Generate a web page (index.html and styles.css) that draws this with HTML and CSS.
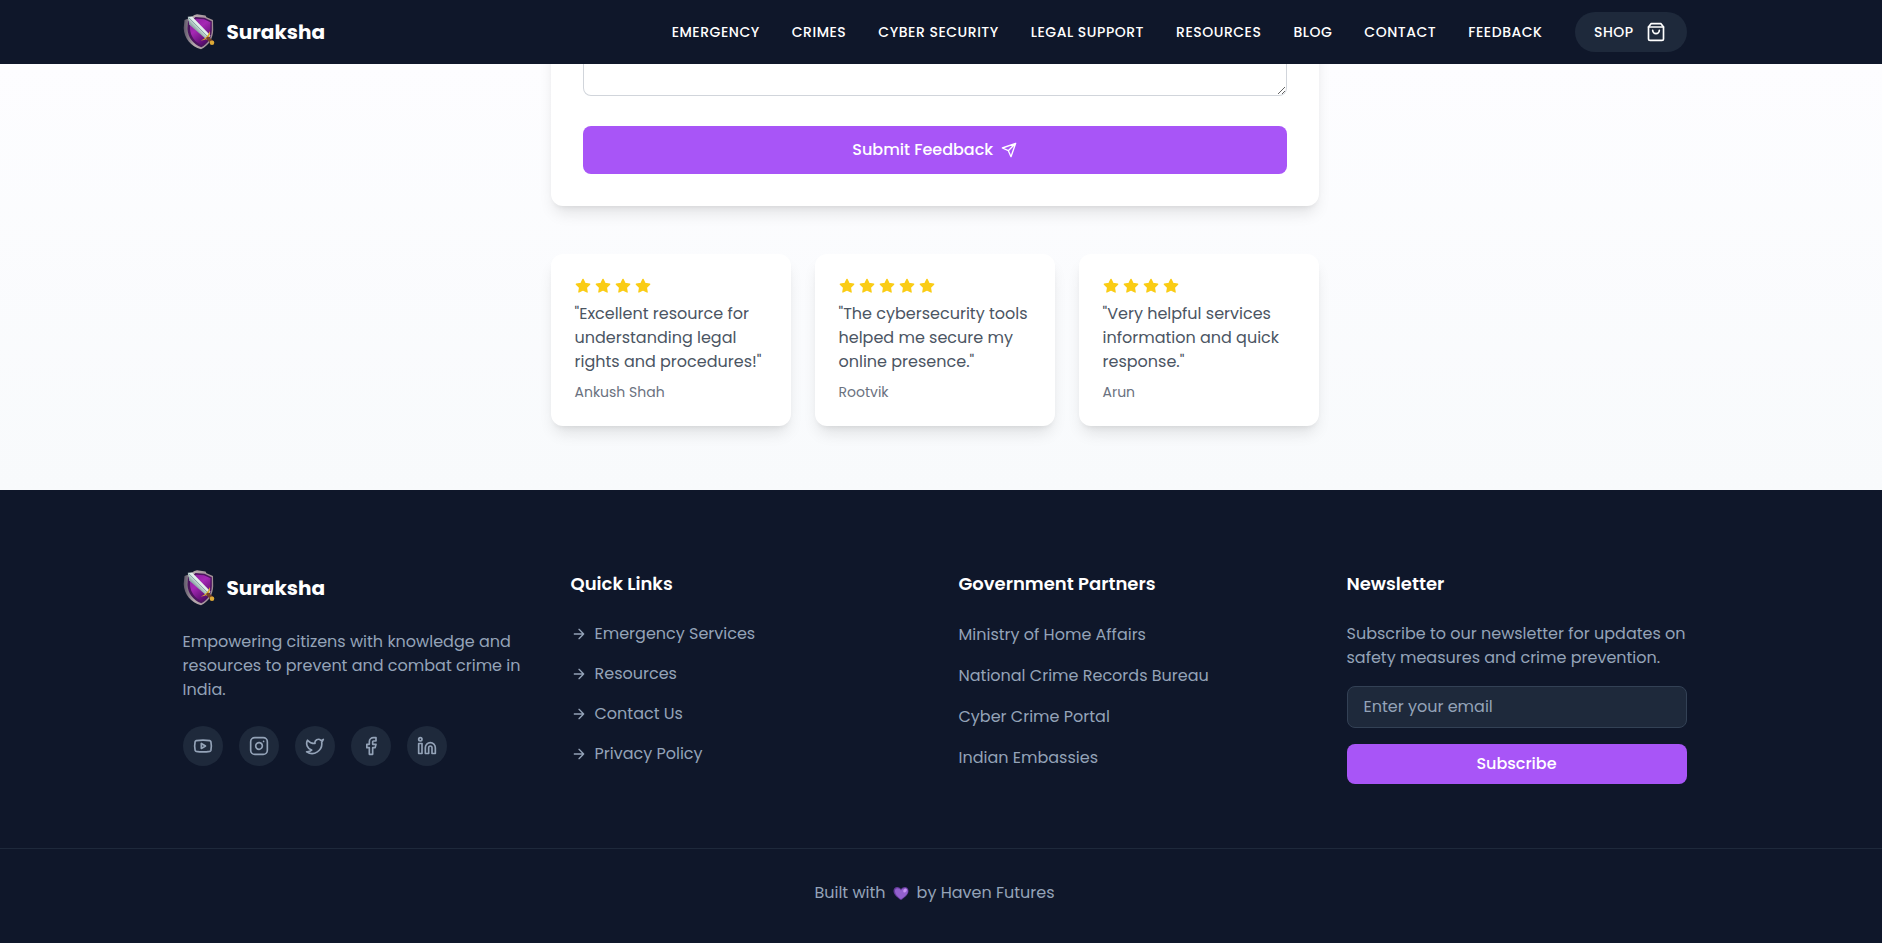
FILE: index.html
```
<!DOCTYPE html>
<html lang="en">
<head>
<meta charset="utf-8">
<title>Suraksha</title>
<link rel="stylesheet" href="styles.css">
</head>
<body>
<svg width="0" height="0" class="defs" aria-hidden="true">
  <defs>
    <linearGradient id="purple" x1="0" y1="0" x2="0.6" y2="1"><stop offset="0" stop-color="#8a1c9c"/><stop offset="0.45" stop-color="#a528b4"/><stop offset="1" stop-color="#560a6b"/></linearGradient>
    <linearGradient id="rim" x1="0" y1="0" x2="1" y2="0"><stop offset="0" stop-color="#5d5668"/><stop offset="0.35" stop-color="#b5a9ad"/><stop offset="1" stop-color="#9c8b91"/></linearGradient>
    <linearGradient id="blade" x1="0" y1="1" x2="1" y2="0"><stop offset="0.4" stop-color="#8fa9a8"/><stop offset="0.55" stop-color="#e3f0ec"/></linearGradient>
    <symbol id="shield" viewBox="0 0 36 36">
      <path d="M1.500 6 6 4.300 11.500 1 14 .200 22.500 1.500 23.500 3.200 30 6 30.200 16C30 24.500 26 31.500 18 35.200 8 32.500 1 24.500.700 14z" fill="url(#rim)"/>
      <path d="M5 7 9 6 12.500 3 21.500 3.700 28.800 7.300 28.800 16C28.500 24 25 30 18.300 33.300 10 30 5 23.500 4.500 15z" fill="#4d155f"/>
      <path d="M7 7.500 13.500 4.800 21 5.300 27.500 8.200 27.300 16C27 23 24 28 18.500 31.200 11.500 28 7.500 22 7 15z" fill="url(#purple)"/>
      <path d="M4.800 2.800 9 2.600 27.500 21.500 24 26 6.200 10.500z" fill="url(#blade)"/>
      <path d="M6 4 25.500 23.500" stroke="#78999a" stroke-width=".8"/>
      <path d="M26.800 17c1.800 5-3.500 9.500-9 9.500 4.500-1.600 7.500-5 9-9.500z" fill="#d9a72e"/>
      <path d="m25 24.500 4 3.500" stroke="#76432a" stroke-width="3.500"/>
      <circle cx="29" cy="28.700" r="2.300" fill="#dda936"/>
    </symbol>
    <symbol id="star" viewBox="0 0 24 24"><path d="M12 2l3.090 6.260L22 9.270l-5 4.870 1.180 6.880L12 17.770l-6.180 3.250L7 14.140 2 9.270l6.910-1.010L12 2z" fill="#facc15" stroke="#facc15" stroke-width="2" stroke-linejoin="round"/></symbol>
    <symbol id="arrow" viewBox="0 0 24 24"><path d="M5 12h14M12 5l7 7-7 7"/></symbol>
  </defs>
</svg>

<header class="header">
  <div class="container header-row">
    <a class="brand"><svg class="logo"><use href="#shield"/></svg><span>Suraksha</span></a>
    <nav class="nav">
      <a>EMERGENCY</a><a>CRIMES</a><a>CYBER SECURITY</a><a>LEGAL SUPPORT</a><a>RESOURCES</a><a>BLOG</a><a>CONTACT</a><a>FEEDBACK</a>
      <a class="shop">SHOP<svg class="i20" viewBox="0 0 24 24"><path d="M6 2 3 6v14a2 2 0 0 0 2 2h14a2 2 0 0 0 2-2V6l-3-4z"/><path d="M3 6h18M16 10a4 4 0 0 1-8 0"/></svg></a>
    </nav>
  </div>
</header>

<main class="main">
  <section class="form-card">
    <textarea class="message" aria-label="Message"></textarea>
    <button class="btn submit">Submit Feedback<svg class="i16" viewBox="0 0 24 24"><path d="M22 2 11 13M22 2l-7 20-4-9-9-4z"/></svg></button>
  </section>
  <section class="reviews">
    <article class="review">
      <div class="stars"><svg><use href="#star"/></svg><svg><use href="#star"/></svg><svg><use href="#star"/></svg><svg><use href="#star"/></svg></div>
      <p class="quote">"Excellent resource for understanding legal rights and procedures!"</p>
      <p class="name">Ankush Shah</p>
    </article>
    <article class="review">
      <div class="stars"><svg><use href="#star"/></svg><svg><use href="#star"/></svg><svg><use href="#star"/></svg><svg><use href="#star"/></svg><svg><use href="#star"/></svg></div>
      <p class="quote">"The cybersecurity tools helped me secure my online presence."</p>
      <p class="name">Rootvik</p>
    </article>
    <article class="review">
      <div class="stars"><svg><use href="#star"/></svg><svg><use href="#star"/></svg><svg><use href="#star"/></svg><svg><use href="#star"/></svg></div>
      <p class="quote">"Very helpful services information and quick response."</p>
      <p class="name">Arun</p>
    </article>
  </section>
</main>

<footer class="footer">
  <div class="container columns">
    <div>
      <a class="brand"><svg class="logo"><use href="#shield"/></svg><span>Suraksha</span></a>
      <p class="about">Empowering citizens with knowledge and resources to prevent and combat crime in India.</p>
      <div class="socials">
        <a><svg class="i20" viewBox="0 0 24 24"><path d="M2.500 17a24.120 24.120 0 0 1 0-10 2 2 0 0 1 1.400-1.400 49.560 49.560 0 0 1 16.200 0A2 2 0 0 1 21.500 7a24.120 24.120 0 0 1 0 10 2 2 0 0 1-1.400 1.400 49.550 49.550 0 0 1-16.200 0A2 2 0 0 1 2.500 17"/><path d="m10 15 5-3-5-3z"/></svg></a>
        <a><svg class="i20" viewBox="0 0 24 24"><rect x="2" y="2" width="20" height="20" rx="5"/><path d="M16 11.370A4 4 0 1 1 12.630 8 4 4 0 0 1 16 11.370zM17.500 6.500h.01"/></svg></a>
        <a><svg class="i20" viewBox="0 0 24 24"><path d="M22 4s-.7 2.100-2 3.400c1.600 10-9.400 17.300-18 11.600 2.200.1 4.400-.6 6-2C3 15.500.500 9.600 3 5c2.200 2.600 5.600 4.100 9 4-.9-4.200 4-6.600 7-3.800 1.100 0 3-1.200 3-1.200z"/></svg></a>
        <a><svg class="i20" viewBox="0 0 24 24"><path d="M18 2h-3a5 5 0 0 0-5 5v3H7v4h3v8h4v-8h3l1-4h-4V7a1 1 0 0 1 1-1h3z"/></svg></a>
        <a><svg class="i20" viewBox="0 0 24 24"><path d="M16 8a6 6 0 0 1 6 6v7h-4v-7a2 2 0 0 0-4 0v7h-4v-7a6 6 0 0 1 6-6z"/><rect x="2" y="9" width="4" height="12"/><circle cx="4" cy="4" r="2"/></svg></a>
      </div>
    </div>
    <div>
      <h3>Quick Links</h3>
      <ul class="links">
        <li><svg class="i16"><use href="#arrow"/></svg><span>Emergency Services</span></li>
        <li><svg class="i16"><use href="#arrow"/></svg><span>Resources</span></li>
        <li><svg class="i16"><use href="#arrow"/></svg><span>Contact Us</span></li>
        <li><svg class="i16"><use href="#arrow"/></svg><span>Privacy Policy</span></li>
      </ul>
    </div>
    <div>
      <h3>Government Partners</h3>
      <ul class="partners">
        <li>Ministry of Home Affairs</li><li>National Crime Records Bureau</li><li>Cyber Crime Portal</li><li>Indian Embassies</li>
      </ul>
    </div>
    <div>
      <h3>Newsletter</h3>
      <p>Subscribe to our newsletter for updates on safety measures and crime prevention.</p>
      <input class="email" type="email" placeholder="Enter your email">
      <button class="btn subscribe">Subscribe</button>
    </div>
  </div>
  <div class="credit">
    <span>Built with</span>
    <svg class="heart" viewBox="0 0 16 16"><path d="M8 15C4 12 0 9 0 5.200 0 .6 5.500-.2 8 3.300 10.500-.2 16 .6 16 5.200 16 9 12 12 8 15z" fill="#653b9b"/><path d="M8 14C4.500 11.500 1.500 8.500 1.500 5.200 1.500 1.800 6 1.500 8 4.800c2-3.500 7.300-2.800 7.300.6C15.300 9 11.500 11.800 8 14z" fill="#9260cd"/><ellipse cx="12.300" cy="4.800" rx="2.300" ry="1.600" transform="rotate(-50 12.300 4.800)" fill="#c794f5"/></svg>
    <span>by Haven Futures</span>
  </div>
</footer>
</body>
</html>
```
FILE: styles.css
```
* { box-sizing: border-box; margin: 0; padding: 0; }

body {
  height: 943px;
  overflow: hidden;
  background: #0f172a;
  font-family: Poppins, Inter, sans-serif;
  font-size: 16px;
  line-height: 24px;
  display: flex;
  flex-direction: column;
}

.defs { position: absolute; }
svg { display: block; flex: none; fill: none; stroke: currentColor; stroke-width: 2; stroke-linecap: round; stroke-linejoin: round; }
.logo { width: 36px; height: 36px; stroke: none; }
.i16 { width: 16px; height: 16px; }
.i20 { width: 20px; height: 20px; }
ul { list-style: none; }
input, button, textarea { font: inherit; }

.container { width: 1504px; margin-left: 182.5px; }

/* Header */
.header { height: 64px; flex: none; background: #0f172a; color: #fff; position: relative; z-index: 1; }
.header-row { height: 64px; display: flex; align-items: center; justify-content: space-between; }
.brand { display: flex; align-items: center; gap: 8px; color: #fff; font-size: 20px; font-weight: 700; line-height: 36px; }
.nav { display: flex; align-items: center; gap: 32px; font-size: 14px; font-weight: 500; letter-spacing: .52px; }
.shop { width: 112px; height: 40px; padding: 0 21px 0 19.5px; border-radius: 20px; background: #1e293b; display: flex; align-items: center; justify-content: space-between; }

/* Feedback form and testimonials */
.main { height: 426px; flex: none; display: flow-root; padding-left: 550.5px; background: linear-gradient(#fdfdff, #f8fafc); }
.form-card { width: 768px; height: 242px; margin-top: -100px; padding: 100px 32px 0; background: #fff; border-radius: 12px; box-shadow: 0 10px 15px -3px rgba(0,0,0,.1), 0 4px 6px -4px rgba(0,0,0,.1); }
.message { display: block; width: 704px; height: 32px; border: 1px solid #d1d5db; border-top: 0; border-radius: 0 0 8px 8px; background: #fff; resize: vertical; }
.btn { display: flex; align-items: center; justify-content: center; width: 100%; border: 0; border-radius: 8px; background: #a855f7; color: #fff; font-weight: 500; }
.submit { height: 48px; margin-top: 30px; gap: 7.500px; }
.reviews { width: 768px; margin-top: 48px; display: grid; grid-template-columns: repeat(3, 1fr); gap: 24px; }
.review { height: 172px; padding: 24px; background: #fff; border-radius: 12px; box-shadow: 0 10px 15px -3px rgba(0,0,0,.1), 0 4px 6px -4px rgba(0,0,0,.1); }
.stars { display: flex; gap: 4px; margin-bottom: 8px; }
.stars svg { width: 16px; height: 16px; stroke: none; }
.quote { color: #4b5563; }
.name { margin-top: 8px; font-size: 14px; line-height: 20px; color: #6b7280; }

/* Footer */
.footer { flex: 1; background: #0f172a; color: #94a3b8; }
.columns { height: 358px; padding-top: 80px; display: grid; grid-template-columns: repeat(4, 340px); gap: 48px; }
.about { margin-top: 24px; }
.socials { display: flex; gap: 16px; margin-top: 24px; }
.socials a { width: 40px; height: 40px; border-radius: 50%; background: #1e293b; display: grid; place-items: center; }
h3 { font-size: 18px; font-weight: 600; line-height: 28px; color: #fff; margin-bottom: 24px; }
.links { display: grid; gap: 16px; }
.links li { display: flex; align-items: center; gap: 8px; }
.partners { display: grid; gap: 17px; padding-top: 1px; }
.email { display: block; width: 100%; height: 42px; margin: 16px 0; padding: 0 16px 1px; border: 1px solid #334155; border-radius: 8px; background: #1e293b; color: #fff; }
.email::placeholder { color: #94a3b8; opacity: 1; }
.subscribe { height: 40px; }
.credit { height: 95px; width: 100%; padding: 32px 13px 0 0; border-top: 1px solid #1e293b; display: flex; justify-content: center; align-items: flex-start; gap: 7.500px; }
.heart { width: 16px; height: 15px; margin-top: 5px; stroke: none; }
```
